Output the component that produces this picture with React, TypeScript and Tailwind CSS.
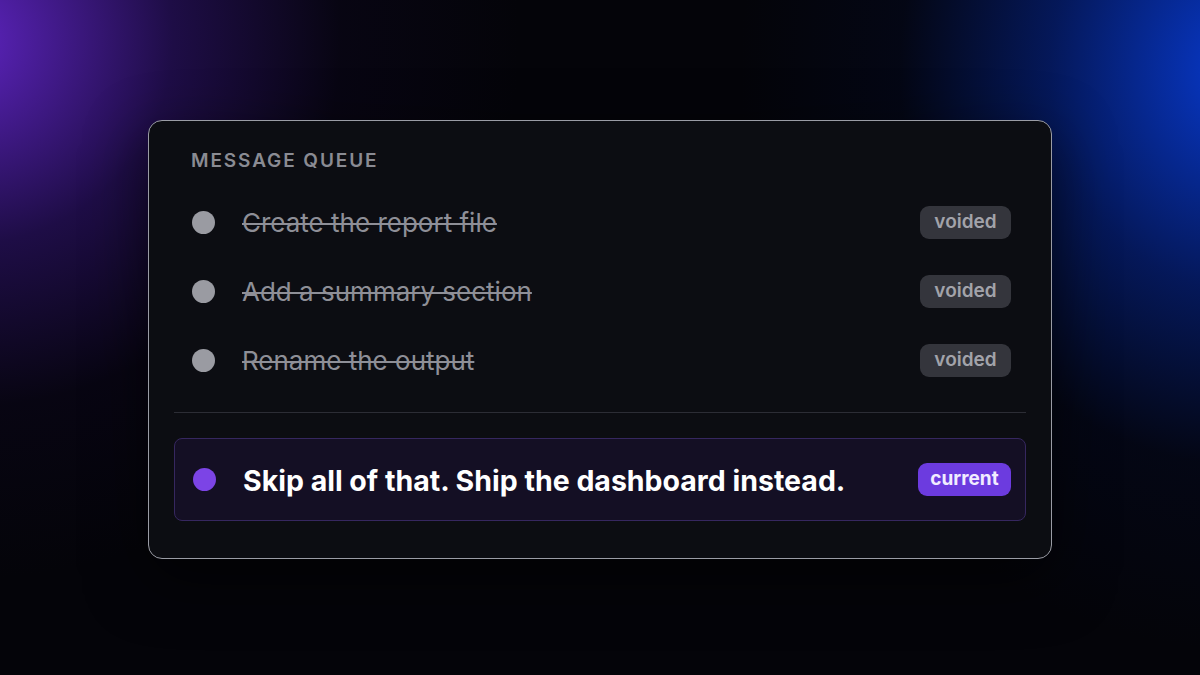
import React from "react";

const voided = ["Create the report file", "Add a summary section", "Rename the output"];

export default function App() {
  return (
    <div
      className="min-h-screen w-full bg-[#040409] bg-[radial-gradient(ellipse_560px_540px_at_-40px_40px,rgba(105,40,215,0.9),rgba(62,24,145,0.45)_38%,rgba(22,9,55,0.2)_68%,transparent_100%),radial-gradient(ellipse_500px_580px_at_1240px_70px,rgba(8,60,215,0.95),rgba(5,40,155,0.55)_38%,rgba(3,16,65,0.2)_68%,transparent_100%)] flex justify-center pt-[120px]"
      style={{ fontFamily: "Inter, 'Noto Sans', sans-serif" }}
    >
      <div className="w-[904px] h-[439px] rounded-[14px] border border-[#9a9ca5] bg-[#0c0d12] px-[25px] pt-[28px] shadow-[0_20px_60px_rgba(0,0,0,0.6)]">
        {/* header */}
        <div className="pl-[17px] h-6 flex items-center text-[19px] font-semibold tracking-[0.1em] text-[#8a8b93]">
          MESSAGE QUEUE
        </div>

        {/* voided messages */}
        <div className="mt-[15px]">
          {voided.map((t) => (
            <div key={t} className="h-[69px] flex items-center pl-[18px] pr-[15px]">
              <span className="w-[23px] h-[23px] rounded-full bg-[#9a9ba2] shrink-0" />
              <span className="ml-[27px] text-[26px] text-[#8e8f97] line-through decoration-[#8e8f97] decoration-2 flex-1">
                {t}
              </span>
              <span className="h-[33px] w-[91px] flex items-center justify-center rounded-[9px] bg-[#34353c] text-[19px] font-semibold text-[#a2a3aa]">
                voided
              </span>
            </div>
          ))}
        </div>

        <div className="mt-[17px] h-px bg-[#2c2d35]" />

        {/* current message */}
        <div className="mt-[25px] h-[83px] rounded-[8px] border border-[#36275f] bg-[#140f24] flex items-center pl-[18px] pr-[14px]">
          <span className="w-[23px] h-[23px] rounded-full bg-[#7c44e6] shrink-0" />
          <span className="ml-[27px] flex-1 text-[28.5px] font-bold text-white pt-[3px]">
            Skip all of that. Ship the dashboard instead.
          </span>
          <span className="h-[33px] w-[93px] flex items-center justify-center rounded-[9px] bg-[#6c3bdf] text-[19px] font-bold text-[#f1ecff]">
            current
          </span>
        </div>
      </div>
    </div>
  );
}
